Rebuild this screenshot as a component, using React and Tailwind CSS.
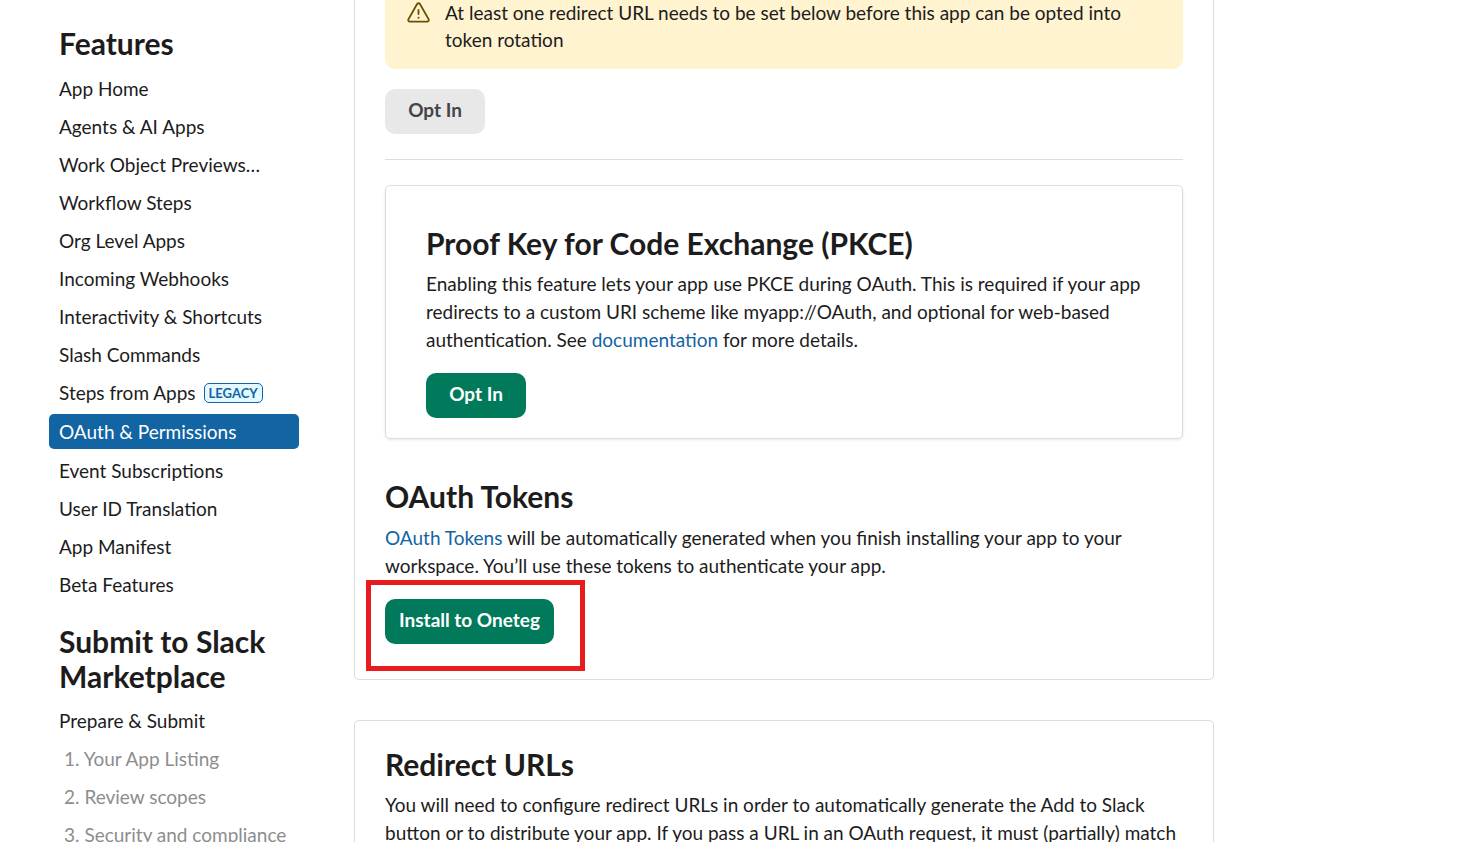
import clsx from "clsx";

const features = [
  { label: "App Home" },
  { label: "Agents & AI Apps" },
  { label: "Work Object Previews…" },
  { label: "Workflow Steps" },
  { label: "Org Level Apps" },
  { label: "Incoming Webhooks" },
  { label: "Interactivity & Shortcuts" },
  { label: "Slash Commands" },
  { label: "Steps from Apps", legacy: true },
  { label: "OAuth & Permissions", active: true },
  { label: "Event Subscriptions" },
  { label: "User ID Translation" },
  { label: "App Manifest" },
  { label: "Beta Features" },
];

const submitSteps = ["Your App Listing", "Review scopes", "Security and compliance"];

function NavItem({ item }) {
  return (
    <li>
      <a
        href="#"
        className={clsx(
          "flex h-[35px] items-center gap-2 rounded-[5px] px-[10px] whitespace-nowrap",
          item.active && "my-px bg-[#1264a3] text-white"
        )}
      >
        {item.label}
        {item.legacy && (
          <span className="rounded-[5px] border border-[#1264a3] bg-[#e3f8ff] px-1 text-[13px] leading-[18px] font-bold text-[#1264a3]">
            LEGACY
          </span>
        )}
      </a>
    </li>
  );
}

function Sidebar() {
  return (
    <nav className="w-[250px] shrink-0 pt-[26px]">
      <h2 className="px-[10px] text-[30px] leading-[35px] font-bold">Features</h2>

      <ul className="mt-[10px] flex flex-col gap-[3px]">
        {features.map((item) => (
          <NavItem key={item.label} item={item} />
        ))}
      </ul>

      <h2 className="mt-[22px] px-[10px] text-[30px] leading-[35px] font-bold">
        Submit to Slack Marketplace
      </h2>

      <ul className="mt-[9px] flex flex-col gap-[3px]">
        <NavItem item={{ label: "Prepare & Submit" }} />
        {submitSteps.map((step, i) => (
          <li
            key={step}
            className="flex h-[35px] items-center px-[15px] whitespace-nowrap text-[#8d8d8e]"
          >
            {i + 1}. {step}
          </li>
        ))}
      </ul>
    </nav>
  );
}

function WarningIcon() {
  return (
    <svg
      viewBox="0 0 20 20"
      className="mt-px h-[26px] w-[26px] shrink-0"
      fill="none"
      stroke="#6b4f00"
      strokeWidth="1.4"
      strokeLinecap="round"
      strokeLinejoin="round"
      aria-hidden="true"
    >
      <path d="M9.3 3.1a1.3 1.3 0 0 1 2.2 0l6.6 11.6a1.3 1.3 0 0 1-1.1 2H3.8a1.3 1.3 0 0 1-1.1-2z" />
      <path d="M10.4 7.6v3.2" />
      <circle cx="10.4" cy="13.6" r="0.8" fill="#6b4f00" stroke="none" />
    </svg>
  );
}

function Button({ children, className, ...props }) {
  return (
    <button
      type="button"
      className={clsx(
        "h-[45px] min-w-[100px] rounded-[10px] px-[14px] pb-[3px] font-bold",
        className
      )}
      {...props}
    >
      {children}
    </button>
  );
}

export default function App() {
  return (
    <div className="flex h-screen gap-[55px] overflow-hidden bg-white pl-[49px] font-['Lato',sans-serif] text-[19px] leading-[28px] text-[#1d1c1d]">
      <Sidebar />

      <main className="-mt-px w-full max-w-[860px]">

        <section className="rounded-b-[5px] border border-t-0 border-[#dddddd] px-[30px] pb-[35px]">

          <div className="flex gap-[14px] rounded-b-[10px] bg-[#fff3d0] pr-10 pb-4 pl-5 leading-[27px]">
            <WarningIcon />
            <p>
              At least one redirect URL needs to be set below before this app can be opted into
              token rotation
            </p>
          </div>

          <Button disabled className="mt-5 bg-[#e8e8e8] text-[#454447]">Opt In</Button>

          <hr className="mt-[25px] border-[#dddddd]" />

          {/* PKCE */}
          <div className="mt-[25px] rounded-[5px] border border-[#dddddd] px-10 pt-[39px] pb-5 shadow-[0_1px_3px_rgba(0,0,0,0.1)]">
            <h2 className="text-[30px] leading-[36px] font-bold">
              Proof Key for Code Exchange (PKCE)
            </h2>
            <p className="mt-[9px]">
              Enabling this feature lets your app use PKCE during OAuth. This is required if your
              app redirects to a custom URI scheme like myapp://OAuth, and optional for web-based
              authentication. See{" "}
              <a href="#" className="text-[#1264a3]">documentation</a> for more details.
            </p>
            <Button className="mt-[19px] bg-[#007a5a] text-white">Opt In</Button>
          </div>

          {/* Tokens */}
          <h2 className="mt-[39px] text-[30px] leading-[36px] font-bold">OAuth Tokens</h2>
          <p className="mt-[10px]">
            <a href="#" className="text-[#1264a3]">OAuth Tokens</a> will be automatically generated
            when you finish installing your app to your workspace. You’ll use these tokens to
            authenticate your app.
          </p>
          <div className="relative mt-[19px] w-fit">
            <Button className="bg-[#007a5a] text-white">Install to Oneteg</Button>
            <div className="pointer-events-none absolute -top-[19px] -left-[19px] h-[91px] w-[219px] border-5 border-[#e81c1f]" />
          </div>
        </section>

        <section className="mt-10 rounded-[5px] border border-[#dddddd] px-[30px] pt-[25px] pb-9">
          <h2 className="text-[30px] leading-[36px] font-bold">Redirect URLs</h2>
          <p className="mt-[9px]">
            You will need to configure redirect URLs in order to automatically generate the Add to
            Slack button or to distribute your app. If you pass a URL in an OAuth request, it must
            (partially) match one of the URLs you enter here.
          </p>
        </section>

      </main>
    </div>
  );
}
